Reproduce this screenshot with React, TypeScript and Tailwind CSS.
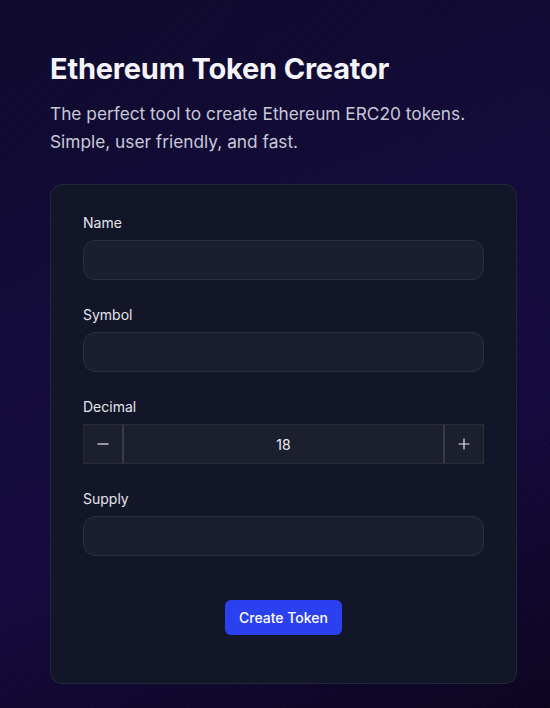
import React from "react";

function Field({ label }: { label: string }) {
  return (
    <div className="flex flex-col">
      <label className="text-[14px] leading-[20px] text-[#e4e5ec]">{label}</label>
      <input className="mt-[7px] h-[40px] w-full rounded-[12px] border border-[#2a2f42] bg-[#1a1e2e] px-3 text-[14px] text-white outline-none" />
    </div>
  );
}

export default function App() {
  return (
    <div
      className="min-h-[708px] w-full bg-[#120a36] text-white"
      style={{ fontFamily: "Inter, 'Noto Sans', sans-serif" }}
    >
      <div className="min-h-[708px] w-full bg-[linear-gradient(160deg,#0e0a2c_0%,#140b3c_45%,#150a3e_65%,#0c0520_100%)]">
        <div className="min-h-[708px] w-full bg-[repeating-linear-gradient(135deg,rgba(255,255,255,0.012)_0px,rgba(255,255,255,0.012)_1px,transparent_1px,transparent_4px)] px-[50px] pt-[50px]">
          <h1 className="text-[29px] font-bold leading-[38px] tracking-[-0.2px] text-[#f4f4f8]">
            Ethereum Token Creator
          </h1>
          <p className="mt-[12px] w-[450px] text-[17.3px] leading-[28px] text-[#c9c8d9]">
            The perfect tool to create Ethereum ERC20 tokens. Simple, user friendly, and fast.
          </p>
          <div className="mt-[28px] w-[467px] rounded-[12px] border border-[#23273a] bg-[#131628] px-[32px] pb-[48px] pt-[28px]">
            <div className="flex flex-col gap-[25px]">
              <Field label="Name" />
              <Field label="Symbol" />
              <div className="flex flex-col">
                <label className="text-[14px] leading-[20px] text-[#e4e5ec]">Decimal</label>
                <div className="mt-[7px] flex h-[40px] w-full border border-[#2a2c34] bg-[#1c1f2e]">
                  <button className="flex w-[40px] items-center justify-center border-r-2 border-[#383a44]">
                    <svg width="12" height="12" viewBox="0 0 12 12">
                      <path d="M0.5 6h11" stroke="#e8e8ee" strokeWidth="1.2" />
                    </svg>
                  </button>
                  <div className="flex flex-1 items-center justify-center text-[14px] text-[#eeeef4]">18</div>
                  <button className="flex w-[40px] items-center justify-center border-l-2 border-[#383a44]">
                    <svg width="12" height="12" viewBox="0 0 12 12">
                      <path d="M0.5 6h11M6 0.5v11" stroke="#e8e8ee" strokeWidth="1.2" />
                    </svg>
                  </button>
                </div>
              </div>
              <Field label="Supply" />
            </div>
            <div className="mt-[44px] flex justify-center">
              <button className="h-[35px] w-[117px] rounded-[6px] bg-[#2b40ee] text-[14px] font-medium text-white">
                Create Token
              </button>
            </div>
          </div>
        </div>
      </div>
    </div>
  );
}
